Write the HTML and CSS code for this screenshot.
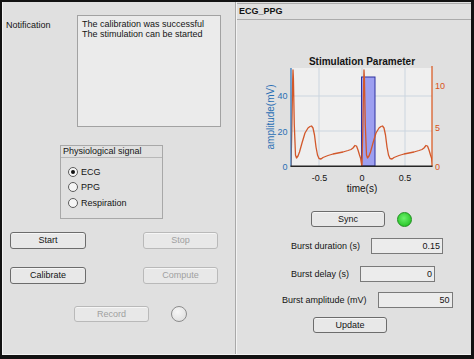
FILE: index.html
```html
<!DOCTYPE html>
<html>
<head>
<meta charset="utf-8">
<link rel="stylesheet" href="styles.css">
</head>
<body>
<div class="frame">
  <div class="lpanel">
    <div class="notify-row">
      <div class="notify-label">Notification</div>
      <div class="notify-box">The calibration was successful<br>The stimulation can be started</div>
    </div>
    <div class="group">
      <div class="group-head">Physiological signal</div>
      <div class="radios">
        <div class="radio-row"><span class="radio checked"></span><span>ECG</span></div>
        <div class="radio-row"><span class="radio"></span><span>PPG</span></div>
        <div class="radio-row"><span class="radio"></span><span>Respiration</span></div>
      </div>
    </div>
    <div class="btn-row first">
      <div class="btn">Start</div>
      <div class="btn disabled right">Stop</div>
    </div>
    <div class="btn-row second">
      <div class="btn">Calibrate</div>
      <div class="btn disabled right">Compute</div>
    </div>
    <div class="record-row">
      <div class="btn disabled rec">Record</div>
      <div class="lamp"></div>
    </div>
  </div>
  <div class="rpanel">
    <div class="rhead">ECG_PPG</div>
    <svg class="chart" width="234" height="175" viewBox="237 20 234 175" xmlns="http://www.w3.org/2000/svg">
      <defs>
        <clipPath id="ax"><rect x="291" y="66" width="141" height="100"/></clipPath>
      </defs>
      <text x="362" y="65" text-anchor="middle" class="ttl">Stimulation Parameter</text>
      <rect x="291" y="68" width="141" height="98" fill="#efefef"/>
      <g stroke="#cbd5df" stroke-width="1">
        <line x1="319" y1="68" x2="319" y2="166"/>
        <line x1="362" y1="68" x2="362" y2="166"/>
        <line x1="405" y1="68" x2="405" y2="166"/>
        <line x1="291" y1="131" x2="432" y2="131"/>
        <line x1="291" y1="96" x2="432" y2="96"/>
      </g>
      <rect x="361.5" y="77" width="13.5" height="89" fill="#9d9ff0" stroke="#2d31a0" stroke-width="1"/>
      <polyline clip-path="url(#ax)" fill="none" stroke="#d2582b" stroke-width="1.3" stroke-linejoin="round" points="291,166 291.8,130 292.7,80 293,70 293.4,78 294.3,125 295.5,155 296.5,158 298,156 299.5,152 302,143 305,133 308,128 310,126.5 311.5,126 313,128 314.5,135 316,147 317.5,155 319,158.5 321,159 323,157.5 328,155.5 333,154 338,153 343,152 348,150.5 351,149.5 353,148 355,145.5 356.5,146 358,150 359.5,155 360.5,158 361.5,164 362,166 362.8,130 363.7,80 364,70 364.4,78 365.3,125 366.5,155 367.5,158 369,156 370.5,152 373,143 376,133 379,128 381,126.5 382.5,126 384,128 385.5,135 387,147 388.5,155 390,158.5 392,159 394,157.5 399,155.5 404,154 409,153 414,152 419,150.5 422,149.5 424,148 426,145.5 427.5,146 429,150 430.5,155 431.5,158 432.5,164 433,166"/>
      <line x1="291" y1="68" x2="291" y2="166.5" stroke="#2a6fb4" stroke-width="1.2"/>
      <line x1="432" y1="66" x2="432" y2="166.5" stroke="#d95319" stroke-width="1.2"/>
      <line x1="290.5" y1="166.3" x2="432.5" y2="166.3" stroke="#262626" stroke-width="1.5"/>
      <g class="tl-left" text-anchor="end">
        <text x="287.5" y="169.5">0</text>
        <text x="287.5" y="134.5">20</text>
        <text x="287.5" y="99">40</text>
      </g>
      <g class="tl-right">
        <text x="435" y="169.5">0</text>
        <text x="435" y="130.5">5</text>
        <text x="435" y="89">10</text>
      </g>
      <g class="tl-x" text-anchor="middle">
        <text x="319.5" y="181">-0.5</text>
        <text x="362" y="181">0</text>
        <text x="405" y="181">0.5</text>
      </g>
      <text x="362" y="191.5" text-anchor="middle" class="xlab">time(s)</text>
      <text transform="translate(274,117) rotate(-90)" text-anchor="middle" class="ylab">amplitude(mV)</text>
    </svg>
    <div class="sync-row">
      <div class="btn sync">Sync</div>
      <div class="led"></div>
    </div>
    <div class="field-row f1">
      <span class="flabel">Burst duration (s)</span>
      <span class="fbox w72">0.15</span>
    </div>
    <div class="field-row f2">
      <span class="flabel">Burst delay (s)</span>
      <span class="fbox w75">0</span>
    </div>
    <div class="field-row f3">
      <span class="flabel">Burst amplitude (mV)</span>
      <span class="fbox w75">50</span>
    </div>
    <div class="update-row">
      <div class="btn upd">Update</div>
    </div>
  </div>
</div>
</body>
</html>
```
FILE: styles.css
```css
* { box-sizing: border-box; }
html, body {
  margin: 0;
  padding: 0;
}
body {
  width: 474px;
  height: 359px;
  overflow: hidden;
  background: #121212;
  font-family: "Liberation Sans", Arial, sans-serif;
  font-size: 9px;
  color: #141414;
}
.frame {
  margin: 2px 3px 4px 2px;
  height: 353px;
  background: #e0e0e0;
  display: flex;
  border-left: 1px solid #f3f3f3;
  border-bottom: 1px solid #f3f3f3;
}
.lpanel {
  width: 233px;
  flex: none;
  border-right: 1px solid #a9a9a9;
  display: flex;
  flex-direction: column;
}
.notify-row {
  display: flex;
  padding: 13px 0 0 3px;
}
.notify-label {
  width: 71px;
  margin-top: 5px;
  line-height: 11px;
}
.notify-box {
  width: 144px;
  height: 112px;
  border: 1px solid #a2a2a2;
  background: #ebebeb;
  padding: 3px 4px;
  line-height: 10px;
}
.group {
  margin: 18px 0 0 57px;
  width: 103px;
  height: 74px;
  border: 1px solid #a8a8a8;
}
.group-head {
  height: 12px;
  line-height: 11px;
  padding-left: 2px;
  border-bottom: 1px solid #b8b8b8;
}
.radios {
  padding: 6px 0 0 7px;
  display: flex;
  flex-direction: column;
}
.radio-row {
  height: 15.5px;
  display: flex;
  align-items: center;
}
.radio {
  width: 10px;
  height: 10px;
  border: 1px solid #5c5c5c;
  border-radius: 50%;
  background: #f6f6f6;
  margin-right: 3px;
  display: flex;
  align-items: center;
  justify-content: center;
}
.radio.checked::after {
  content: "";
  width: 4px;
  height: 4px;
  border-radius: 50%;
  background: #111;
}
.btn {
  height: 17px;
  border: 1px solid #6c6c6c;
  border-radius: 3px;
  background: #e8e8e8;
  display: flex;
  align-items: center;
  justify-content: center;
  line-height: 1;
  box-shadow: inset 0 1px 0 #f6f6f6;
}
.btn.disabled {
  border-color: #b9b9b9;
  color: #a0a0a0;
}
.btn-row {
  display: flex;
  padding-left: 7px;
}
.btn-row .btn { width: 76px; }
.btn-row .btn.right { width: 75px; margin-left: 57px; }
.btn-row.first { margin-top: 13px; }
.btn-row.second { margin-top: 18px; }
.record-row {
  display: flex;
  align-items: center;
  margin-top: 22px;
  padding-left: 71px;
}
.btn.rec { width: 75px; height: 16px; }
.lamp {
  width: 16px;
  height: 16px;
  margin-left: 22px;
  border-radius: 50%;
  border: 1px solid #8c8c8c;
  background: radial-gradient(circle at 40% 35%, #f7f7f7, #dadada);
}
.rpanel {
  flex: 1;
  border-left: 1px solid #f3f3f3;
  display: flex;
  flex-direction: column;
}
.rhead {
  margin-top: 1px;
  height: 17px;
  line-height: 15px;
  border-top: 1px solid #ababab;
  border-bottom: 1px solid #ababab;
  padding-left: 2px;
  font-weight: bold;
}
.chart { display: block; }
.chart text { font-family: "Liberation Sans", Arial, sans-serif; }
.ttl { font-size: 10px; font-weight: bold; fill: #141414; }
.tl-left text { font-size: 9px; fill: #2a6fb4; }
.tl-right text { font-size: 9px; fill: #d95319; }
.tl-x text { font-size: 9px; fill: #141414; }
.xlab { font-size: 10px; fill: #141414; }
.ylab { font-size: 10px; fill: #2a6fb4; }
.sync-row {
  display: flex;
  align-items: center;
  margin-top: 16px;
  padding-left: 74px;
}
.btn.sync { width: 74px; height: 16px; }
.led {
  width: 15px;
  height: 15px;
  margin-left: 12px;
  border-radius: 50%;
  border: 1px solid #1f8f1f;
  background: radial-gradient(circle at 45% 40%, #6cf26c, #14b814);
}
.field-row {
  display: flex;
  align-items: center;
  height: 16px;
}
.field-row.f1 { margin-top: 11px; padding-left: 54px; }
.field-row.f2 { margin-top: 12px; padding-left: 54px; }
.field-row.f3 { margin-top: 10px; padding-left: 45px; }
.flabel { margin-right: 11px; white-space: nowrap; }
.fbox {
  height: 16px;
  border: 1px solid #7a7a7a;
  background: #ececec;
  text-align: right;
  padding-right: 2px;
  line-height: 14px;
}
.fbox.w72 { width: 72px; }
.fbox.w75 { width: 75px; }
.update-row {
  margin-top: 9px;
  padding-left: 76px;
  display: flex;
}
.btn.upd { width: 74px; height: 16px; }
```
